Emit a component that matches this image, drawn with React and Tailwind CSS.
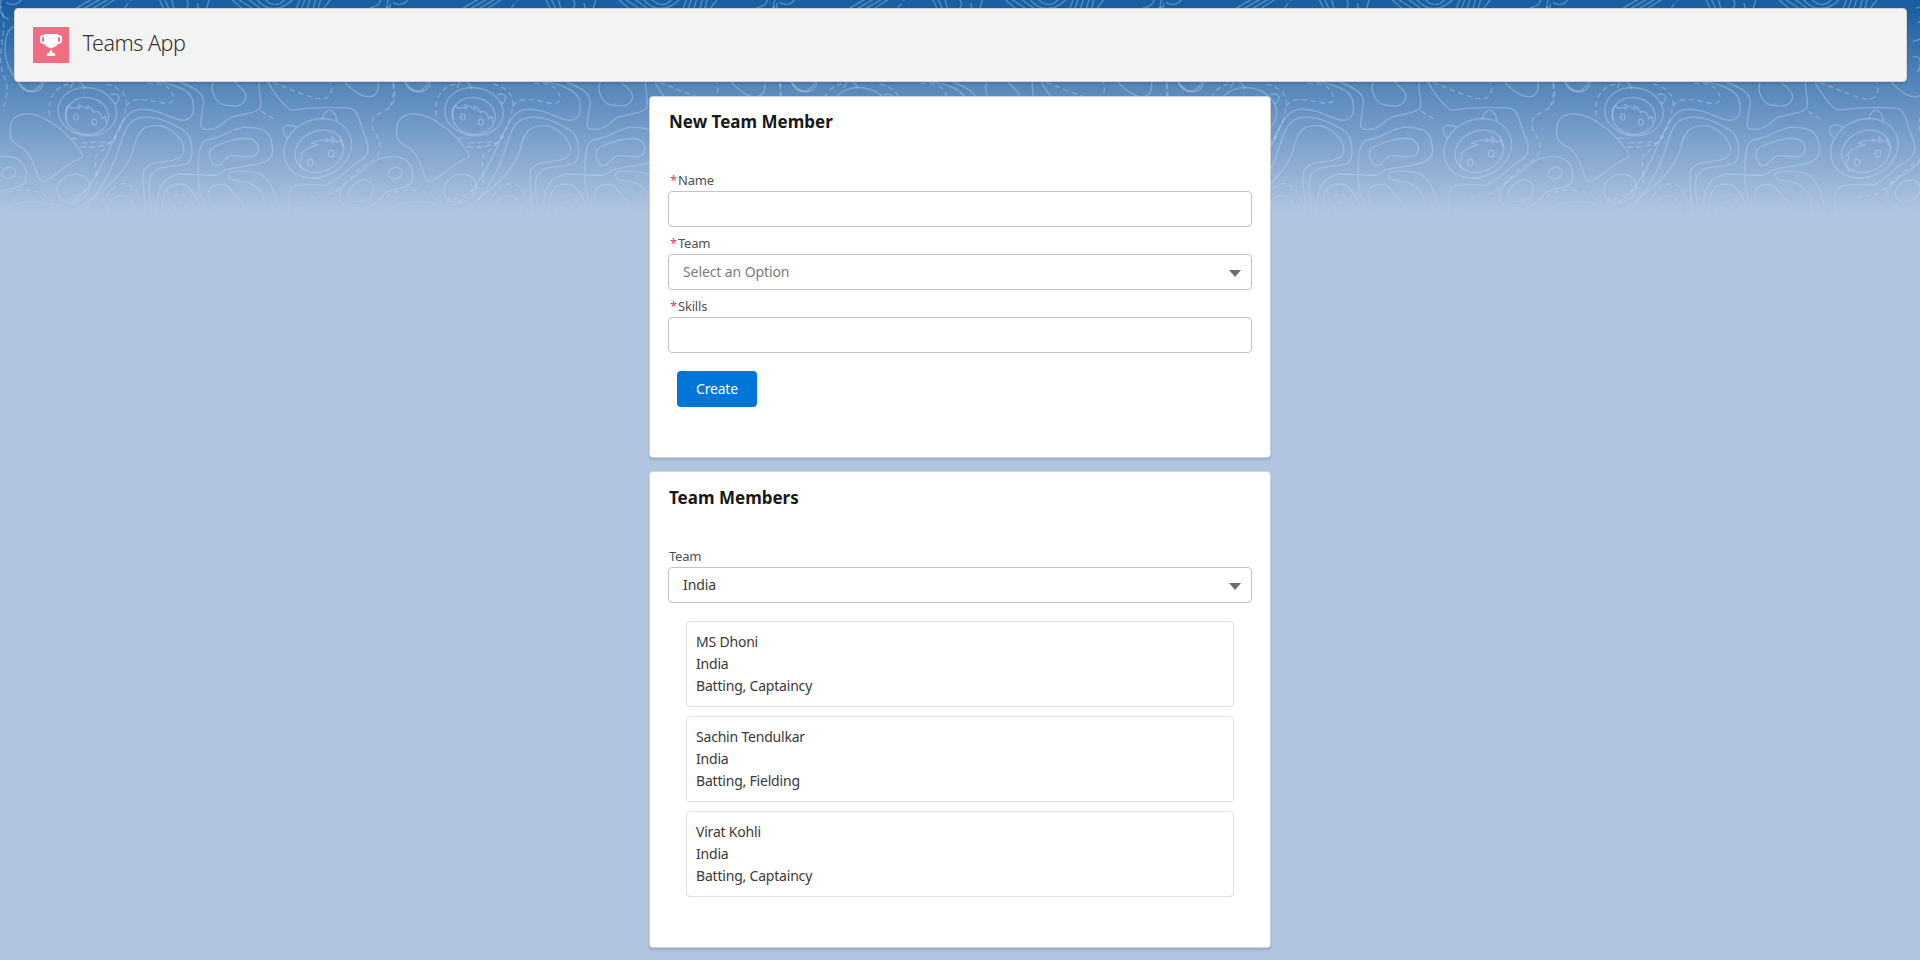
import React from "react";

// One repeat of the topographic pattern is 1160 units wide, three units to a pixel.
const SOLID = [
  "M30 400C30 355 45 342 85 342C130 342 190 390 220 425C250 465 262 468 225 482C190 500 150 540 130 545C105 540 110 480 75 450C45 430 30 425 30 400Z",
  "M-140 600C-150 560 -110 540 -70 510C-40 480 -10 468 25 470C70 472 85 510 76 545C60 570 20 560 -5 580C-30 610 -50 632 -90 625C-118 620 -135 615 -140 600Z",
  "M470 246C520 250 565 270 576 295C585 320 580 345 570 353C555 368 530 358 505 348C480 336 455 328 425 328C385 328 370 360 350 400C320 470 270 580 210 610C170 630 140 600 90 605C50 605 20 620 0 640",
  "M540 246C580 262 615 280 610 310C605 350 595 385 610 387C660 395 670 360 700 350C740 340 780 335 782 320C784 300 775 270 777 248",
  "M240 640C310 570 345 490 365 420C380 370 400 348 450 352C500 358 520 375 550 390C580 410 585 480 560 490C510 508 470 490 450 530C440 580 455 610 455 640",
  "M215 640C300 580 385 520 403 440C415 390 430 375 480 377C520 385 550 420 552 450C545 505 440 465 430 520C425 560 437 600 437 640",
  "M640 495C620 460 625 445 655 435C690 420 710 415 740 415C780 418 785 460 760 468C730 475 700 460 685 470C670 485 660 500 640 495Z",
  "M640 248C630 270 645 310 675 315C700 318 720 322 732 305C748 285 730 270 705 248",
  "M470 640C470 560 490 530 540 522C610 522 650 535 670 515C700 490 820 510 818 450C815 400 800 380 730 382C670 395 670 415 620 420C590 430 595 500 595 540C595 580 610 610 625 640",
  "M805 248C830 290 855 325 875 330C920 325 1000 320 1050 325C1080 330 1080 380 1100 420C1115 460 1090 480 1060 495C1030 520 1000 550 980 555C920 555 875 545 867 580C865 600 867 620 867 640",
  "M1035 248C1060 275 1090 292 1110 290C1135 285 1135 265 1135 248",
  "M55 248C70 280 105 285 125 248",
  "M42 80C12 88 8 160 26 200C45 240 75 275 95 275C120 275 130 260 130 248",
  "M835 640C830 580 810 530 770 518C730 512 690 510 685 525C685 545 720 540 750 550C790 570 795 600 798 640",
  "M625 590C620 560 650 550 675 555C700 565 700 590 725 605C735 620 730 640 710 640C650 640 630 620 625 590Z",
  "M485 640C485 580 500 552 540 552C575 552 590 600 612 640",
  "M320 640C330 600 345 585 370 587C395 590 405 620 402 640",
  "M212 262C217 250 222 244 230 240C240 245 250 252 254 266",
  "M333 284C350 278 360 286 356 298C354 308 350 308 344 311",
  "M966 356C972 340 982 328 992 331C1004 336 1008 347 1010 361",
  "M862 414C842 396 846 374 866 376C878 376 884 378 889 382",
  "M201 358C195 340 198 325 207 316L213 326C222 320 230 322 240 326L234 314C246 318 254 322 264 328L262 318C274 322 278 330 282 338C294 328 304 342 306 356L316 350L318 366",
  "M906 512C896 496 898 480 908 474L902 466C910 448 930 440 956 434L934 430C950 418 968 420 984 424L976 416C990 418 996 424 1000 428L996 410L1010 426L1022 420L1024 430L1032 440",
  "M8 -8C-6 20 0 44 24 58M20 8C40 20 60 10 66 -6M230 24L275 -2M255 24L300 -2M280 24L325 -2M305 24L345 -2M478 -2L490 24M494 -2L506 24M515 0L522 24",
  "M695 -2L725 24M715 -2L755 24M745 -2L780 24M770 -2C800 38 850 30 878 -2M795 -2C820 22 840 16 855 -2M890 24L900 -2M905 24L915 -2M922 24L930 -2M940 24L947 -2M955 24L962 -2M972 24L992 -2M1110 24C1135 18 1145 6 1140 -2M560 24C570 12 562 4 560 -2M620 24L628 -2",
  "M-40 50L5 20M-46 68L0 40M-60 125C-45 118 -20 110 0 122M-60 170C-38 166 -32 190 -46 215",
];
const DASHED = [
  "M205 252C160 262 140 300 150 358M320 252C362 262 385 290 378 320C370 370 350 425 290 465C280 490 295 520 288 560",
  "M215 415L242 416M243 440C300 445 340 430 350 410M248 428L320 426",
  "M380 318C395 290 440 298 480 308C520 316 532 300 510 270C500 256 480 250 440 250",
  "M820 248C880 270 920 290 960 297C990 300 1000 270 990 248M785 335L830 362",
  "M1180 248C1190 300 1180 320 1150 335C1120 345 1110 360 1120 390C1145 430 1150 450 1120 480C1060 510 1030 570 980 585C920 590 905 600 900 640",
  "M0 590C40 560 100 570 130 580C170 630 220 590 260 570M305 610C340 540 400 520 432 620",
  "M505 640C505 565 562 565 585 630M526 635C530 590 555 600 562 635",
  "M8 40C20 100 -10 160 8 220C30 260 20 300 8 326M375 22L392 0M595 24L590 -2M1170 24L1172 -2",
];

function Tile({ x }) {
  return (
    <g transform={`translate(${x} 0)`}>
      {SOLID.map((d) => <path key={d} d={d} />)}
      <g strokeDasharray="13 14">{DASHED.map((d) => <path key={d} d={d} />)}</g>
      <ellipse cx="262" cy="335" rx="88" ry="72" transform="rotate(8 262 335)" />
      <ellipse cx="261" cy="348" rx="65" ry="55" transform="rotate(8 261 348)" />
      <ellipse cx="228" cy="351" rx="7" ry="9" />
      <ellipse cx="283" cy="366" rx="7" ry="9" />
      <ellipse cx="953" cy="445" rx="104" ry="86" transform="rotate(-24 953 445)" />
      <ellipse cx="958" cy="454" rx="75" ry="61" transform="rotate(-24 958 454)" />
      <ellipse cx="931" cy="487" rx="8" ry="10" />
      <ellipse cx="994" cy="461" rx="8" ry="10" />
      <ellipse cx="26" cy="519" rx="21" ry="17" transform="rotate(-10 26 519)" />
      <ellipse cx="-77" cy="573" rx="39" ry="30" transform="rotate(-32 -77 573)" />
      <ellipse cx="220" cy="565" rx="50" ry="41" transform="rotate(-22 220 565)" />
    </g>
  );
}

function Backdrop() {
  return (
    <svg className="absolute inset-x-0 top-0 h-[230px] w-full" viewBox="0 0 5760 690" preserveAspectRatio="none" aria-hidden="true">
      <defs>
        <linearGradient id="fade" x1="0" y1="0" x2="0" y2="1">
          <stop offset="0" stopColor="#fff" />
          <stop offset="0.82" stopColor="#fff" />
          <stop offset="0.96" stopColor="#000" />
        </linearGradient>
        <mask id="fadeMask" maskUnits="userSpaceOnUse" x="0" y="0" width="5760" height="690">
          <rect width="5760" height="690" fill="url(#fade)" />
        </mask>
      </defs>
      <g mask="url(#fadeMask)">
        <g fill="none" stroke="#c8dcf8" strokeOpacity="0.34" strokeWidth="4.4" strokeLinecap="round" strokeLinejoin="round">
          {[0, 1160, 2320, 3480, 4640, 5800].map((x) => <Tile key={x} x={x} />)}
        </g>
      </g>
    </svg>
  );
}

function Trophy() {
  return (
    <svg viewBox="0 0 36 36" className="size-9 shrink-0 bg-[#ef6e84]" aria-hidden="true">
      <path fill="none" stroke="#fff" strokeWidth="2" d="M12 9.2H9.2Q8 9.2 8 10.5v2.9q0 2.3 2.3 2.3H12M24 9.2h2.8q1.2 0 1.2 1.3v2.9q0 2.3-2.3 2.3H24" />
      <path fill="#fff" d="M12 7h12q1 0 1 1v7.5q0 2.5-2.2 3.7L18 21.6l-4.8-2.4Q11 18 11 15.5V8q0-1 1-1ZM17.3 23h1.4q.2 3 2.6 3.3.9.1.9 1V29h-8.4v-1.7q0-.9.9-1 2.4-.3 2.6-3.3Z" />
    </svg>
  );
}

function Card({ title, className, children }) {
  return (
    <section className={`w-[622px] rounded-[4px] border border-[#d0d3d8] bg-white px-[18px] shadow-[0_2px_2px_rgba(0,0,0,0.12)] ${className}`}>
      <h2 className="pl-px text-[17px] leading-[27px] font-bold text-[#181818]">{title}</h2>
      {children}
    </section>
  );
}

function Label({ required, children }) {
  return (
    <div className="flex h-[27px] items-center pt-[7px] pl-px text-[13px] tracking-[-0.2px] text-[#505050]">
      {required && <span className="mr-[2px] ml-[1px] w-[6px] text-[#e0405a]">*</span>}
      {children}
    </div>
  );
}

function Field({ label, required, select, value, muted }) {
  return (
    <div>
      <Label required={required}>{label}</Label>
      <div className="flex h-9 items-center justify-between rounded-[4px] border border-[#c4c4c4] bg-white pr-[10px] pl-[14px] text-[14px] tracking-[-0.1px]">
        <span className={`pb-[2px] ${muted ? "text-[#7c7c7c]" : "text-[#3a3836]"}`}>{value}</span>
        {select && (
          <svg viewBox="0 0 12 7" className="mt-[2px] h-[7px] w-3" aria-hidden="true">
            <path d="M0 0h12L6 7z" fill="#706e6b" />
          </svg>
        )}
      </div>
    </div>
  );
}

const members = [
  { name: "MS Dhoni", team: "India", skills: "Batting, Captaincy" },
  { name: "Sachin Tendulkar", team: "India", skills: "Batting, Fielding" },
  { name: "Virat Kohli", team: "India", skills: "Batting, Captaincy" },
];

export default function App() {
  return (
    <div className="relative h-[960px] overflow-hidden bg-[#b0c4df] font-['Noto_Sans',sans-serif]">
      <div className="absolute inset-x-0 top-0 h-[212px] bg-linear-to-b from-[#195fa1] from-4% via-[#5889bd] via-43% to-[#b0c4df]" />
      <Backdrop />
      <div className="relative flex flex-col items-center pt-2">
        <header className="mb-[14px] flex h-[74px] w-[1893px] items-center gap-[14px] rounded-[4px] border border-[#d6d6d6] bg-[#f3f3f3] px-[18px] pb-[1px] shadow-[0_2px_2px_rgba(0,0,0,0.12)]">
          <Trophy />
          <h1 className="pb-[3px] text-[21.5px] leading-7 font-light tracking-[-0.45px] text-[#303030]">Teams App</h1>
        </header>
        <Card title="New Team Member" className="mb-[13px] h-[362px] pt-[11px]">
          <div className="pt-[29px]">
            <Field label="Name" required />
            <Field label="Team" required select muted value="Select an Option" />
            <Field label="Skills" required />
          </div>
          <button className="mt-[18px] ml-[9px] h-9 w-20 rounded-[4px] bg-[#0176d8] pb-[2px] text-[14px] tracking-[-0.2px] text-white">Create</button>
        </Card>
        <Card title="Team Members" className="h-[477px] pt-[12px]">
          <div className="pt-[29px]">
            <Field label="Team" select value="India" />
          </div>
          <ul className="mx-[18px] mt-[18px] flex flex-col gap-[9px]">
            {members.map((m) => (
              <li key={m.name} className="h-[86px] rounded-[4px] border border-[#e3e3e3] p-[9px] text-[14px] leading-[22px] tracking-[-0.2px] text-[#3a3836]">
                <p>{m.name}</p>
                <p>{m.team}</p>
                <p>{m.skills}</p>
              </li>
            ))}
          </ul>
        </Card>
      </div>
    </div>
  );
}
